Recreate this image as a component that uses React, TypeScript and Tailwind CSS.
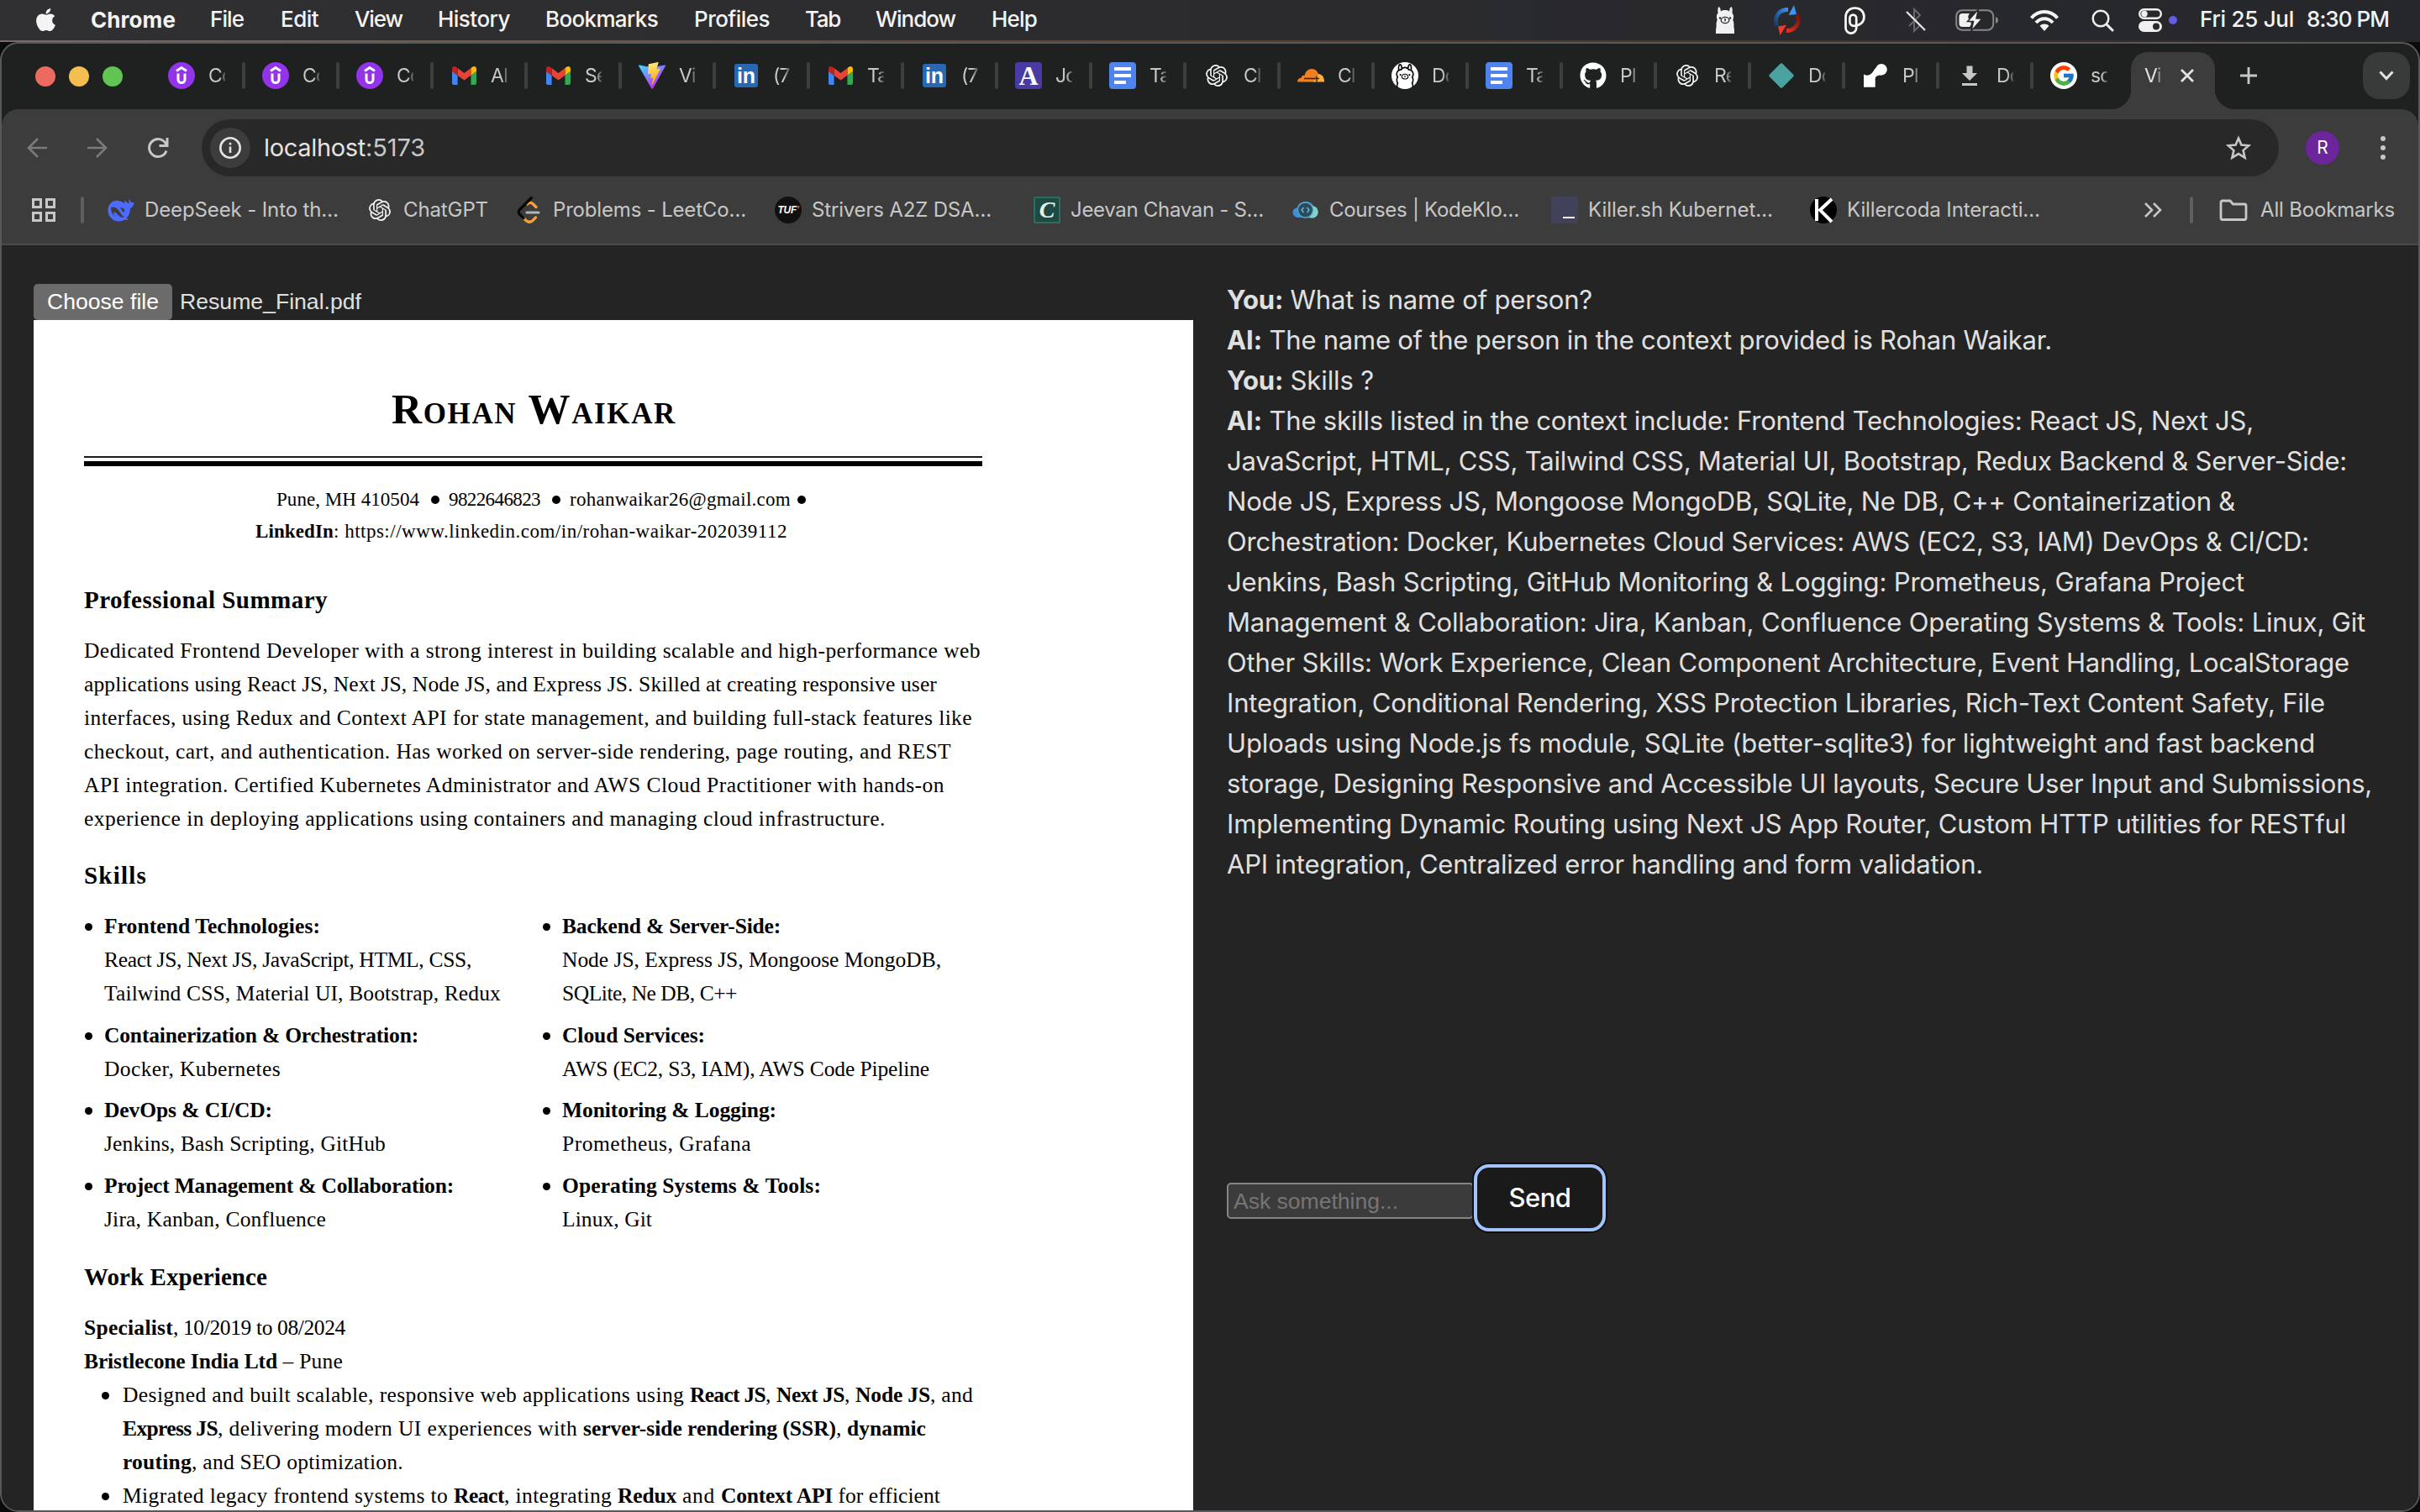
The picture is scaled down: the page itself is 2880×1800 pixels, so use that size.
import { useLayoutEffect, useRef } from "react";
import type { ReactNode } from "react";
import { FaApple, FaGithub } from "react-icons/fa";
import { SiOpenai, SiOllama } from "react-icons/si";
import { FcGoogle } from "react-icons/fc";

/** One run of text tracked so that it is `w` pixels long. */
function Fit({ w, className = "", children }: { w: number; className?: string; children: string }) {
  const ref = useRef<HTMLSpanElement>(null);
  useLayoutEffect(() => {
    const el = ref.current;
    if (!el) return;
    el.style.letterSpacing = "0px";
    const natural = el.getBoundingClientRect().width;
    el.style.letterSpacing = `${(w - natural) / children.length}px`;
  }, [w, children]);
  return (
    <span ref={ref} className={`inline-block whitespace-pre ${className}`}>
      {children}
    </span>
  );
}

/* ---------- icons ---------- */

const Udemy = () => (
  <svg viewBox="0 0 32 32" className="size-8">
    <circle cx="16" cy="16" r="16" fill="#9333ea" />
    <path d="M10 10.500 16 6.500l6 4M12 13.500v7a4 4 0 0 0 8 0v-7" fill="none" stroke="#fff" strokeWidth="3" />
  </svg>
);

const Gmail = () => (
  <svg viewBox="52 42 88 66" className="h-[22px] w-[29px]">
    <path fill="#4285f4" d="M58 108h14V74L52 59v43c0 3.32 2.69 6 6 6" />
    <path fill="#34a853" d="M120 108h14c3.32 0 6-2.69 6-6V59l-20 15" />
    <path fill="#fbbc04" d="M120 48v26l20-15v-8c0-7.42-8.47-11.65-14.4-7.2" />
    <path fill="#ea4335" d="M72 74V48l24 18 24-18v26L96 92" />
    <path fill="#c5221f" d="M52 51v8l20 15V48l-5.6-4.2c-5.94-4.45-14.4-.22-14.4 7.2" />
  </svg>
);

const Vite = () => (
  <svg viewBox="0 0 256 257" className="size-8">
    <defs>
      <linearGradient id="va" x1="0" y1="0.1" x2="0.6" y2="0.9">
        <stop offset="0" stopColor="#41d1ff" />
        <stop offset="1" stopColor="#bd34fe" />
      </linearGradient>
      <linearGradient id="vb" x1="0.4" y1="0" x2="0.5" y2="0.9">
        <stop offset="0" stopColor="#ffea83" />
        <stop offset="1" stopColor="#ffa800" />
      </linearGradient>
    </defs>
    <path
      fill="url(#va)"
      d="M255.153 37.938L134.897 252.976c-2.483 4.44-8.862 4.466-11.382.048L.875 37.958c-2.746-4.814 1.371-10.646 6.827-9.67l120.385 21.517a6.537 6.537 0 0 0 2.322-.004l117.867-21.483c5.438-.991 9.574 4.796 6.877 9.62Z"
    />
    <path
      fill="url(#vb)"
      d="M185.432.063L96.44 17.501a3.268 3.268 0 0 0-2.634 3.014l-5.474 92.456a3.268 3.268 0 0 0 3.997 3.378l24.777-5.718c2.318-.535 4.413 1.507 3.936 3.838l-7.361 36.047c-.495 2.426 1.782 4.5 4.151 3.78l15.304-4.649c2.372-.72 4.652 1.36 4.15 3.788l-11.698 56.621c-.732 3.542 3.979 5.473 5.943 2.437l1.313-2.028l72.516-144.72c1.215-2.423-.88-5.186-3.54-4.672l-25.505 4.922c-2.396.462-4.435-1.77-3.759-4.114l16.646-57.705c.677-2.35-1.37-4.583-3.769-4.113Z"
    />
  </svg>
);

const LinkedIn = () => (
  <div className="flex size-7 items-center justify-center rounded-[3px] bg-[#2867b2] font-['Liberation_Sans'] text-[25px] leading-none font-bold text-white">
    in
  </div>
);

const LetterA = () => (
  <div className="flex size-8 items-center justify-center rounded-[4px] bg-[#4a3aa5] font-['Liberation_Serif'] text-[32px] leading-none font-bold text-white">
    A
  </div>
);

const Docs = () => (
  <div className="flex size-8 flex-col justify-center gap-1 rounded-[4px] bg-[#4f83ee] pl-[6px]">
    <div className="h-1 w-5 bg-white" />
    <div className="h-1 w-5 bg-white" />
    <div className="h-1 w-[14px] bg-white" />
  </div>
);

const Gpt = () => <SiOpenai className="size-[26px] text-[#f2f2f2]" />;

const Cloudflare = () => (
  <svg viewBox="0 0 32 18" className="h-[18px] w-8">
    <path fill="#f38020" d="M0 16.500c0-3 2-4.700 4.500-4.800C5 9.500 6.500 8.400 8.500 9 9.500 4 13 1 17 1c4.500 0 7.500 3 8 7l-4 8.500z" />
    <path fill="#faae40" d="M19 16.500 25 7c4 0 7 3.500 7 9.500z" />
    <path fill="none" stroke="#20201f" strokeWidth="1.300" d="M8 12.500h18M23 9.500v7" />
  </svg>
);

const Ollama = () => (
  <div className="flex size-8 items-center justify-center rounded-full bg-white">
    <SiOllama className="size-7 text-black" />
  </div>
);

const Diamond = () => (
  <svg viewBox="0 0 32 32" className="size-8">
    <path d="M16 3 29 16 16 29 3 16Z" fill="#4aa3a0" stroke="#4aa3a0" strokeWidth="3.500" strokeLinejoin="round" />
  </svg>
);

const Plug = () => (
  <svg viewBox="0 0 32 32" className="size-8" fill="#fff">
    <circle cx="23" cy="8.700" r="6.800" />
    <path d="M2 14.500c2 1.300 4.500 1.500 7 .500 3.500-1.500 4.500-5 7.500-8.500l7 9c-3.500 0-6.500.500-7.800 3v11.200H2z" />
  </svg>
);

const Download = () => (
  <svg viewBox="0 0 32 32" className="size-8">
    <path d="M12.500 4.500h7v8.500h5.500L16 22 7 13h5.500zM7 25h18v3H7z" fill="#c7c7c7" />
  </svg>
);

const Google = () => (
  <div className="flex size-8 items-center justify-center rounded-full bg-white">
    <FcGoogle className="size-[28px]" />
  </div>
);

const DeepSeek = () => (
  <svg viewBox="0 0 32 28" className="h-7 w-8">
    <path
      fill="#4d6bfe"
      d="M31.500 4.500c-1.500 1-2.500.8-3.300.2C27 3.800 26.600 2.500 26.500.800c-1.600 1.500-1.500 4-.5 5.400-2.200-.4-3.800-1.700-5.500-3.400-.8 1.200-.5 2.700.5 4-3.500-2.600-8.500-5-13-3.500C3 5 .500 9.500.500 14.500.500 21.500 6 27.500 13.500 27.500c2.700 0 5-.7 6.900-2 1.500.6 3.200.8 4.600.1-1-.5-1.900-1.200-2.400-2.100 2.900-3 4.500-7.200 4.400-11.300 2.500-1 4.300-3.900 4.500-7.700z"
    />
    <path fill="#3c3c3c" d="M4.500 10.500c4-.5 7.500 1.500 9.500 5s3.500 6 6.500 6.500c-2.500 1.300-5.500.500-7.500-1.500S9.500 16 8 16.500s-.500 3 1 5c-3.500-2-5.500-7-4.500-11z" />
    <path fill="#3c3c3c" d="M15 11.500c2.500-1 5.500 1 5.500 4.500l-2.500.500c0-2-1.500-2.500-3-5z" />
  </svg>
);

const LeetCode = () => (
  <svg viewBox="0 0 32 32" className="size-8" fill="none" strokeLinecap="round" strokeLinejoin="round">
    <path d="M13.500 9c2.500-2 5-2 7 0l3.500 3.500M9 25.500l3 3c2.500 2.200 5.500 2.200 8 0l3.500-3.500" stroke="#f5a13b" strokeWidth="3.200" />
    <path d="M18.500 1.500 4.500 15.500c-1.500 1.700-1.500 4 0 5.700l4.500 4.500" stroke="#070707" strokeWidth="3.200" />
    <path d="M13 19h14" stroke="#b3b3b3" strokeWidth="3.200" />
  </svg>
);

const Tuf = () => (
  <div className="flex size-8 items-center justify-center rounded-full bg-[#101010] font-['Liberation_Sans'] text-[12px] leading-none font-bold tracking-[-0.3px] text-white italic">
    TUF<span className="text-[#e8553a]">'</span>
  </div>
);

const Jeevan = () => (
  <div className="flex size-8 items-center justify-center rounded-[2px] border-2 border-[#2f6b5f] bg-[#1d4a42] font-['Liberation_Serif'] text-[28px] leading-none font-bold text-[#e6f0ea] italic">
    C
  </div>
);

const KodeKloud = () => (
  <svg viewBox="0 0 32 22" className="h-[22px] w-8" fill="none">
    <path d="M7 20a6 6 0 0 1-1-12C7 3 11 1 16 1s8.500 2.500 9.500 6a7 7 0 0 1-1 13.500z" fill="#3f8ed6" />
    <path d="M24 6a7.300 7.300 0 0 1 .500 14.500L20 20z" fill="#7fd3cf" />
    <circle cx="15.500" cy="11" r="9" fill="#2e4a5a" stroke="#58a9c4" strokeWidth="1.300" />
    <path d="m13.500 8-2.500 3 2.500 3M17.500 8l2.500 3-2.500 3" stroke="#5bc0de" strokeWidth="1.400" />
  </svg>
);

const KillerSh = () => (
  <div className="flex size-8 items-end justify-end bg-[#41415a] pr-1 pb-[6px]">
    <div className="h-[2px] w-[14px] bg-white" />
  </div>
);

const Killercoda = () => (
  <svg viewBox="0 0 32 32" className="size-8">
    <circle cx="16" cy="16" r="16" fill="#000" />
    <path d="M8 3v26M26 3 12 16l14 14" fill="none" stroke="#fff" strokeWidth="4" />
  </svg>
);

/* ---------- menu bar ---------- */

function StatusIcons() {
  return (
    <div className="flex items-center">
      <svg viewBox="0 0 24 32" className="h-8 w-6">
        <path
          fill="#f0f0f0"
          d="M4.500 0c1.700.300 2.300 3 2.300 5.500C8.500 4.300 10 4 12 4s3.500.300 5.200 1.500c0-2.500.600-5.200 2.300-5.500 1.500 1.500 1.300 4.500 1 7.500 2 2 2 5.500.800 8 1 2.500 1.500 5.500 1 8 .800 2.500.700 5.500.700 8.500H1c0-3-.100-6 .700-8.500-.500-2.500 0-5.500 1-8C1.500 13 1.500 9.500 3.500 7.500c-.300-3-.500-6 1-7.500z"
        />
        <g fill="none" stroke="#2b2a2d" strokeWidth="1.300">
          <ellipse cx="12" cy="16" rx="4.800" ry="3.600" />
          <path d="M12 15.500v2M11 14.800h2" />
        </g>
        <circle cx="6" cy="13.500" r="1.200" fill="#2b2a2d" />
        <circle cx="18" cy="13.500" r="1.200" fill="#2b2a2d" />
      </svg>
      <svg viewBox="0 0 34 36" className="ml-[45px] h-9 w-[34px]" fill="none">
        <defs>
          <linearGradient id="sb" x1="0" y1="1" x2="1" y2="0">
            <stop offset="0" stopColor="#143a6b" />
            <stop offset="1" stopColor="#3f8ff5" />
          </linearGradient>
          <linearGradient id="sr" x1="0" y1="1" x2="1" y2="0">
            <stop offset="0" stopColor="#e8301f" />
            <stop offset="1" stopColor="#6b1210" />
          </linearGradient>
        </defs>
        <path d="M4.500 25C.500 14.500 7.500 5 18 5.500" stroke="url(#sb)" strokeWidth="4.800" />
        <path d="M25 0 28 11 18.500 12z" fill="#3f93f5" />
        <path d="M29 10.500c4.500 9.500-2 20.500-13 20" stroke="url(#sr)" strokeWidth="4.800" />
        <path d="M8.500 36 6 25.500l10-1.800z" fill="#f23a2a" />
      </svg>
      <svg viewBox="0 0 25 33" className="ml-[51px] h-[33px] w-[25px]" fill="none" stroke="#f8f8f8" strokeWidth="2.700">
        <path d="M1.500 12.500v12.800a6.300 6.300 0 0 0 12.700 0V13.500a3.900 3.900 0 0 0-7.800 0v4c0 3.500 2 5.300 5 5.300 7 0 12-4.300 12-10.800C23.400 5.800 19 1.500 12.500 1.500S1.500 6 1.500 12.500z" />
      </svg>
      <svg viewBox="0 0 26 30" className="ml-[47px] h-[30px] w-[26px]" fill="none">
        <path d="m5 8 13 13-7 7V2l7 7L5 22" stroke="#68686b" strokeWidth="2" />
        <path d="m2 5 22 22" stroke="#e9e9e9" strokeWidth="2.200" />
      </svg>
      <svg viewBox="0 0 52 26" className="ml-[34px] h-[26px] w-[52px]" fill="none">
        <rect x="1.200" y="1.200" width="44" height="23.600" rx="7" stroke="#87878a" strokeWidth="2" />
        <path d="M48 9v8c2-.700 3-2.200 3-4s-1-3.300-3-4z" fill="#87878a" />
        <path d="M8.500 5H17q-3.500 4 0 8t0 8H8.500A4 4 0 0 1 4.500 17V9a4 4 0 0 1 4-4z" fill="#f0f0f0" />
        <path d="M27.500 0 14.500 14.500h7L19 26 32 11h-7z" fill="#f0f0f0" stroke="#29292c" strokeWidth="1.500" />
      </svg>
      <svg viewBox="0 0 34 25" className="ml-[37px] h-[25px] w-[34px]" fill="none" stroke="#f4f4f4" strokeWidth="4">
        <path d="M1.500 9.500C10-.500 24-.500 32.500 9.500M7 15c5.500-6.500 14.500-6.500 20 0" />
        <path d="M17 25l-5.500-6.200c3-3.200 8-3.200 11 0z" fill="#f4f4f4" stroke="none" />
      </svg>
      <svg viewBox="0 0 27 27" className="ml-[39px] h-[27px] w-[27px]" fill="none" stroke="#f0f0f0" strokeLinecap="round">
        <circle cx="11" cy="11" r="9.300" strokeWidth="2.500" />
        <path d="m18 18 7 7" strokeWidth="3" />
      </svg>
      <svg viewBox="0 0 28 28" className="ml-[29px] size-7">
        <rect x="1.200" y="1.200" width="25.600" height="10.600" rx="5.300" fill="none" stroke="#f0f0f0" strokeWidth="2.400" />
        <circle cx="7" cy="6.500" r="3.700" fill="#f0f0f0" />
        <rect x="0" y="15" width="28" height="13" rx="6.500" fill="#f0f0f0" />
        <circle cx="21" cy="21.500" r="4" fill="#29292c" />
      </svg>
      <div className="ml-2 size-[10px] rounded-full bg-[#625de6]" />
    </div>
  );
}

const menus: [string, number, string][] = [
  ["File", 40, "ml-[41px]"],
  ["Edit", 45, "ml-[44px]"],
  ["View", 57, "ml-[43px]"],
  ["History", 86, "ml-[42px]"],
  ["Bookmarks", 134, "ml-[42px]"],
  ["Profiles", 90, "ml-[43px]"],
  ["Tab", 42, "ml-[42px]"],
  ["Window", 95, "ml-[42px]"],
  ["Help", 54, "ml-[43px]"],
];

function MenuBar() {
  return (
    <div className="flex h-12 shrink-0 items-center bg-linear-to-r from-[#302f31] to-[#26272b] pr-[37px] pl-[39px] text-[26px] leading-[46px] font-medium text-[#f4f4f4]">
      <FaApple className="-mt-[2px] size-[31px]" />
      <Fit w={101} className="ml-[38px] font-bold">Chrome</Fit>
      {menus.map(([label, w, gap]) => (
        <div key={label} className={`-mt-[2px] ${gap}`}>
          <Fit w={w}>{label}</Fit>
        </div>
      ))}
      <div className="ml-auto flex items-center">
        <StatusIcons />
        <Fit w={112} className="-mt-[2px] ml-[27px]">Fri 25 Jul</Fit>
        <Fit w={98} className="-mt-[2px] ml-[15px]">8:30 PM</Fit>
      </div>
    </div>
  );
}

/* ---------- browser chrome ---------- */

const tabs: [ReactNode, string][] = [
  [<Udemy />, "Co"],
  [<Udemy />, "Co"],
  [<Udemy />, "Co"],
  [<Gmail />, "AI"],
  [<Gmail />, "Se"],
  [<Vite />, "Vi"],
  [<LinkedIn />, "(7"],
  [<Gmail />, "Ta"],
  [<LinkedIn />, "(7"],
  [<LetterA />, "Jo"],
  [<Docs />, "Ta"],
  [<Gpt />, "Ch"],
  [<Cloudflare />, "Cl"],
  [<Ollama />, "Do"],
  [<Docs />, "Ta"],
  [<FaGithub className="size-8 text-white" />, "Pl"],
  [<Gpt />, "Re"],
  [<Diamond />, "Do"],
  [<Plug />, "Pl"],
  [<Download />, "Do"],
  [<Google />, "so"],
];

function TabStrip() {
  return (
    <div className="flex h-[78px] shrink-0 items-center pl-10">
      <div className="flex gap-4">
        <div className="size-6 rounded-full bg-[#ed6a5e]" />
        <div className="size-6 rounded-full bg-[#f5bf4f]" />
        <div className="size-6 rounded-full bg-[#61c554]" />
      </div>
      <div className="ml-[34px] flex pb-[2px]">
        {tabs.map(([icon, label], i) => (
          <div key={i} className="flex w-28 items-center pl-5">
            <div className="flex size-8 shrink-0 items-center justify-center">{icon}</div>
            <div className="ml-4 w-5 overflow-hidden text-[23px] leading-8 tracking-[-0.8px] whitespace-nowrap text-[#c7c7c7] [mask-image:linear-gradient(to_right,black_65%,rgba(0,0,0,0.25))]">
              {label}
            </div>
            {i < tabs.length - 1 && <div className="ml-5 h-8 w-1 rounded-full bg-[#3c3e3d]" />}
          </div>
        ))}
      </div>
      <div className="relative ml-1 flex h-[68px] w-[100px] items-center self-end rounded-t-[20px] bg-[#3c3c3c] pb-3 pl-4">
        <div className="absolute bottom-0 -left-6 size-6 bg-[radial-gradient(circle_at_0_0,transparent_24px,#3c3c3c_24.500px)]" />
        <div className="absolute -right-6 bottom-0 size-6 bg-[radial-gradient(circle_at_100%_0,transparent_24px,#3c3c3c_24.500px)]" />
        <div className="w-5 overflow-hidden text-[23px] leading-8 tracking-[-0.8px] whitespace-nowrap text-[#e3e3e3] [mask-image:linear-gradient(to_right,black_65%,rgba(0,0,0,0.25))]">
          Vi
        </div>
        <svg viewBox="0 0 18 18" className="ml-[22px] size-[18px]" stroke="#e3e3e3" strokeWidth="2.800">
          <path d="m2 2 14 14M16 2 2 16" />
        </svg>
      </div>
      <svg viewBox="0 0 22 22" className="mb-[2px] ml-[29px] size-[22px]" stroke="#c7c7c7" strokeWidth="2.800">
        <path d="M11 1v20M1 11h20" />
      </svg>
      <div className="mr-[10px] mb-[2px] ml-auto flex h-14 w-14 items-center justify-center rounded-[20px] bg-[#393b3a]">
        <svg viewBox="0 0 18 12" className="h-3 w-[18px]" fill="none" stroke="#e3e3e3" strokeWidth="3">
          <path d="m1.500 1.500 7.500 8 7.500-8" />
        </svg>
      </div>
    </div>
  );
}

function AddressRow() {
  return (
    <div className="flex h-[92px] shrink-0 items-center pl-[30px]">
      <svg viewBox="0 0 24 24" className="size-6" fill="none" stroke="#7b7b7b" strokeWidth="2.600">
        <path d="M24 12H2M13 1 2 12l11 11" />
      </svg>
      <svg viewBox="0 0 24 24" className="ml-12 size-6" fill="none" stroke="#7b7b7b" strokeWidth="2.600">
        <path d="M0 12h22M11 1l11 11-11 11" />
      </svg>
      <svg viewBox="0 0 26 26" className="ml-[47px] size-[26px]" fill="none" stroke="#c7c7c7" strokeWidth="3">
        <path d="M23 16.500A10.500 10.500 0 1 1 22 7.500l1.500 2.500M24 1v9.500h-9.500" />
      </svg>
      <div className="ml-[39px] flex h-[68px] w-[2472px] items-center rounded-full bg-[#282828] pl-[10px] text-[29px]">
        <div className="flex size-12 items-center justify-center rounded-full bg-[#3c3c3c]">
          <svg viewBox="0 0 26 26" className="size-[26px]" fill="none" stroke="#e3e3e3" strokeWidth="2.600">
            <circle cx="13" cy="13" r="11.700" />
            <path d="M13 11.500v7.500M13 6.800v2.700" />
          </svg>
        </div>
        <Fit w={121} className="ml-4 text-[#e3e3e3]">localhost</Fit>
        <Fit w={71} className="text-[#c7c7c7]">:5173</Fit>
        <svg viewBox="0 0 30 30" className="mr-[33px] ml-auto size-[30px]" fill="none" stroke="#c7c7c7" strokeWidth="2.600">
          <path d="m15 3.500 3.400 8 8.800.800-6.600 5.800 2 8.600L15 22.100l-7.600 4.600 2-8.600-6.600-5.800 8.800-.800z" />
        </svg>
      </div>
      <div className="ml-8 flex size-10 items-center justify-center rounded-full bg-[#6d259c] text-[21px] text-white">R</div>
      <div className="ml-[49px] flex flex-col gap-[5px]">
        <div className="size-[6px] rounded-full bg-[#c7c7c7]" />
        <div className="size-[6px] rounded-full bg-[#c7c7c7]" />
        <div className="size-[6px] rounded-full bg-[#c7c7c7]" />
      </div>
    </div>
  );
}

const bookmarks: [ReactNode, string, number, string][] = [
  [<DeepSeek />, "DeepSeek - Into th…", 231, "w-[308px]"],
  [<Gpt />, "ChatGPT", 101, "w-[178px]"],
  [<LeetCode />, "Problems - LeetCo…", 230, "w-[308px]"],
  [<Tuf />, "Strivers A2Z DSA…", 214, "w-[308px]"],
  [<Jeevan />, "Jeevan Chavan - S…", 230, "w-[308px]"],
  [<KodeKloud />, "Courses | KodeKlo…", 226, "w-[308px]"],
  [<KillerSh />, "Killer.sh Kubernet…", 220, "w-[308px]"],
  [<Killercoda />, "Killercoda Interacti…", 230, "w-[308px]"],
];

function BookmarksBar() {
  return (
    <div className="flex h-[68px] shrink-0 items-center pb-3 pl-9 text-[24px] leading-8 text-[#c7c7c7]">
      <div className="grid grid-cols-2 gap-1">
        {[0, 1, 2, 3].map((i) => (
          <div key={i} className="size-3 border-3 border-[#c7c7c7]" />
        ))}
      </div>
      <div className="mr-7 ml-[30px] h-8 w-1 rounded-full bg-[#5f5f5f]" />
      {bookmarks.map(([icon, label, w, cell]) => (
        <div key={label} className={`flex shrink-0 items-center ${cell}`}>
          <div className="flex size-8 shrink-0 items-center justify-center">{icon}</div>
          <Fit w={w} className="ml-3">{label}</Fit>
        </div>
      ))}
      <svg viewBox="0 0 22 18" className="ml-[89px] h-[18px] w-[22px]" fill="none" stroke="#c7c7c7" strokeWidth="2.600">
        <path d="m2 1 8 8-8 8M12 1l8 8-8 8" />
      </svg>
      <div className="ml-[33px] h-8 w-1 rounded-full bg-[#5f5f5f]" />
      <svg viewBox="0 0 34 26" className="ml-[31px] h-[26px] w-[34px]" fill="none" stroke="#c7c7c7" strokeWidth="2.800">
        <path d="M4 2h9l3.500 4H30a2 2 0 0 1 2 2v14.500a2 2 0 0 1-2 2H4a2 2 0 0 1-2-2V4a2 2 0 0 1 2-2z" />
      </svg>
      <Fit w={160} className="ml-[15px]">All Bookmarks</Fit>
    </div>
  );
}

/* ---------- resume ---------- */

type Segment = [text: string, width: number, bold?: boolean];

function Line({ segments }: { segments: Segment[] }) {
  return (
    <div className="flex h-10">
      {segments.map(([t, w, bold], i) => (
        <Fit key={i} w={w} className={bold ? "font-bold" : ""}>{t}</Fit>
      ))}
    </div>
  );
}

const Heading = ({ w, children }: { w: number; children: string }) => (
  <h2 className="h-10 text-[29px] leading-10 font-bold">
    <Fit w={w}>{children}</Fit>
  </h2>
);

const summary: Segment[] = [
  ["Dedicated Frontend Developer with a strong interest in building scalable and high-performance web", 1067],
  ["applications using React JS, Next JS, Node JS, and Express JS. Skilled at creating responsive user", 1015],
  ["interfaces, using Redux and Context API for state management, and building full-stack features like", 1057],
  ["checkout, cart, and authentication. Has worked on server-side rendering, page routing, and REST", 1032],
  ["API integration. Certified Kubernetes Administrator and AWS Cloud Practitioner with hands-on", 1024],
  ["experience in deploying applications using containers and managing cloud infrastructure.", 954],
];

const skills: Segment[][][] = [
  [
    [["Frontend Technologies:", 257, true], ["React JS, Next JS, JavaScript, HTML, CSS,", 437], ["Tailwind CSS, Material UI, Bootstrap, Redux", 472]],
    [["Containerization & Orchestration:", 374, true], ["Docker, Kubernetes", 210]],
    [["DevOps & CI/CD:", 200, true], ["Jenkins, Bash Scripting, GitHub", 335]],
    [["Project Management & Collaboration:", 416, true], ["Jira, Kanban, Confluence", 264]],
  ],
  [
    [["Backend & Server-Side:", 260, true], ["Node JS, Express JS, Mongoose MongoDB,", 451], ["SQLite, Ne DB, C++", 208]],
    [["Cloud Services:", 170, true], ["AWS (EC2, S3, IAM), AWS Code Pipeline", 437]],
    [["Monitoring & Logging:", 255, true], ["Prometheus, Grafana", 225]],
    [["Operating Systems & Tools:", 308, true], ["Linux, Git", 107]],
  ],
];

function Resume() {
  return (
    <div className="h-[1430px] w-[1380px] overflow-hidden bg-white pt-[76px] pl-[60px] font-['Liberation_Serif',serif] text-black">
      <div className="w-[1069px]">
        <h1 className="flex h-[60px] justify-center pl-[2px] text-[50px] leading-[60px] font-bold [font-variant-caps:small-caps]">
          <Fit w={339}>Rohan Waikar</Fit>
        </h1>
        <div className="mt-[26px] h-[2px] bg-[#1a1a1a]" />
        <div className="mt-1 h-[6px] bg-black" />
        <div className="mt-[21px] flex h-[38px] items-center pl-[229px] text-[23px] leading-[38px]">
          <Fit w={170}>Pune, MH 410504</Fit>
          <div className="ml-[14px] size-[10px] rounded-full bg-black" />
          <Fit w={109} className="ml-[11px]">9822646823</Fit>
          <div className="ml-[14px] size-[10px] rounded-full bg-black" />
          <Fit w={263} className="ml-[11px]">rohanwaikar26@gmail.com</Fit>
          <div className="ml-2 size-[10px] rounded-full bg-black" />
        </div>
        <div className="flex h-[38px] pl-[204px] text-[23px] leading-[38px]">
          <Fit w={93} className="font-bold">LinkedIn</Fit>
          <Fit w={540}>: https://www.linkedin.com/in/rohan-waikar-202039112</Fit>
        </div>
      </div>

      <div className="mt-[42px]">
        <Heading w={290}>Professional Summary</Heading>
      </div>
      <div className="mt-[21px] text-[25.500px] leading-10">
        {summary.map((s) => (
          <Line key={s[0]} segments={[s]} />
        ))}
      </div>

      <div className="mt-[27px]">
        <Heading w={75}>Skills</Heading>
      </div>
      <div className="mt-[21px] flex text-[25.500px] leading-10">
        {skills.map((column, c) => (
          <div key={c} className="flex w-[545px] shrink-0 flex-col gap-[9.500px]">
            {column.map((group) => (
              <div key={group[0][0]} className="flex">
                <div className="mt-4 mr-[14px] ml-[1px] size-[9px] rounded-full bg-black" />
                <div>
                  {group.map((s) => (
                    <Line key={s[0]} segments={[s]} />
                  ))}
                </div>
              </div>
            ))}
          </div>
        ))}
      </div>

      <div className="mt-7">
        <Heading w={218}>Work Experience</Heading>
      </div>
      <div className="mt-[21px] text-[25.500px] leading-10">
        <Line segments={[["Specialist", 106, true], [", 10/2019 to 08/2024", 205]]} />
        <Line segments={[["Bristlecone India Ltd", 230, true], [" – Pune", 78]]} />
        <div className="flex pl-[21px]">
          <div className="mt-4 mr-4 size-[9px] rounded-full bg-black" />
          <div>
            <Line
              segments={[
                ["Designed and built scalable, responsive web applications using ", 675],
                ["React JS", 90, true],
                [", ", 13],
                ["Next JS", 81, true],
                [", ", 13],
                ["Node JS", 89, true],
                [", and", 51],
              ]}
            />
            <Line
              segments={[
                ["Express JS", 113, true],
                [", delivering modern UI experiences with ", 435],
                ["server-side rendering (SSR)", 301, true],
                [", ", 13],
                ["dynamic", 94, true],
              ]}
            />
            <Line segments={[["routing", 82, true], [", and SEO optimization.", 252]]} />
          </div>
        </div>
        <div className="flex pl-[21px]">
          <div className="mt-4 mr-4 size-[9px] rounded-full bg-black" />
          <Line
            segments={[
              ["Migrated legacy frontend systems to ", 394],
              ["React", 60, true],
              [", integrating ", 135],
              ["Redux", 70, true],
              [" and ", 53],
              ["Context API", 133, true],
              [" for efficient", 128],
            ]}
          />
        </div>
      </div>
    </div>
  );
}

/* ---------- chat ---------- */

const chat: Segment[][] = [
  [["You:", 67, true], [" What is name of person?", 368]],
  [["AI:", 42, true], [" The name of the person in the context provided is Rohan Waikar.", 940]],
  [["You:", 67, true], [" Skills ?", 108]],
  [["AI:", 42, true], [" The skills listed in the context include: Frontend Technologies: React JS, Next JS,", 1180]],
  [["JavaScript, HTML, CSS, Tailwind CSS, Material UI, Bootstrap, Redux Backend & Server-Side:", 1333]],
  [["Node JS, Express JS, Mongoose MongoDB, SQLite, Ne DB, C++ Containerization &", 1200]],
  [["Orchestration: Docker, Kubernetes Cloud Services: AWS (EC2, S3, IAM) DevOps & CI/CD:", 1288]],
  [["Jenkins, Bash Scripting, GitHub Monitoring & Logging: Prometheus, Grafana Project", 1211]],
  [["Management & Collaboration: Jira, Kanban, Confluence Operating Systems & Tools: Linux, Git", 1355]],
  [["Other Skills: Work Experience, Clean Component Architecture, Event Handling, LocalStorage", 1336]],
  [["Integration, Conditional Rendering, XSS Protection Libraries, Rich-Text Content Safety, File", 1307]],
  [["Uploads using Node.js fs module, SQLite (better-sqlite3) for lightweight and fast backend", 1295]],
  [["storage, Designing Responsive and Accessible UI layouts, Secure User Input and Submissions,", 1363]],
  [["Implementing Dynamic Routing using Next JS App Router, Custom HTTP utilities for RESTful", 1332]],
  [["API integration, Centralized error handling and form validation.", 900]],
];

function Chat() {
  return (
    <div className="ml-10 flex flex-col pt-[41px]">
      <div className="h-[1053px] text-[31px] leading-[48px] text-[#e0e0e0]">
        {chat.map((line, i) => (
          <div key={i} className="flex h-12">
            {line.map(([t, w, bold]) => (
              <Fit key={t} w={w} className={bold ? "font-bold" : ""}>{t}</Fit>
            ))}
          </div>
        ))}
      </div>
      <div className="flex items-center">
        <div className="mt-[7px] flex h-[43px] w-[294px] items-center rounded-[5px] border-2 border-[#858585] bg-[#3b3b3b] pl-[6px] font-['Liberation_Sans',sans-serif] text-[26.600px] leading-10 text-[#757575]">
          <Fit w={196}>Ask something...</Fit>
        </div>
        <button className="relative flex h-20 w-[157px] items-center justify-center rounded-[18px] border-4 border-[#a0c4fb] bg-[#1a1a1a] text-[31px] font-medium text-white shadow-[0_0_0_2px_#101010]">
          <Fit w={74}>Send</Fit>
        </button>
      </div>
    </div>
  );
}

export default function App() {
  return (
    <div className="flex h-[1800px] w-[2880px] flex-col overflow-hidden bg-[#0b0b0c] font-['Inter',sans-serif]">
      <MenuBar />
      <div className="h-[2px] shrink-0 bg-linear-to-r from-[#7b6a6a] via-[#5a4030] to-[#2a2728]" />
      <div className="flex h-[1750px] shrink-0 flex-col overflow-hidden rounded-[22px] border-2 border-[#565959] bg-[#1e2120]">
        <TabStrip />
        <div className="flex min-h-0 flex-1 flex-col rounded-t-[20px] bg-[#3c3c3c]">
          <AddressRow />
          <BookmarksBar />
          <div className="flex min-h-0 flex-1 border-t-2 border-[#4a4a4a] bg-[#242424] pl-[38px]">
            <div className="pt-[46px]">
              <div className="flex h-[43px] items-center font-['Liberation_Sans',sans-serif] text-[26.600px] leading-[43px]">
                <div className="flex h-[43px] w-[165px] items-center justify-center rounded-[5px] bg-[#6b6b6b] text-white">
                  <Fit w={133}>Choose file</Fit>
                </div>
                <Fit w={216} className="ml-[9px] text-[#e0e0e0]">Resume_Final.pdf</Fit>
              </div>
              <Resume />
            </div>
            <Chat />
          </div>
        </div>
      </div>
    </div>
  );
}
